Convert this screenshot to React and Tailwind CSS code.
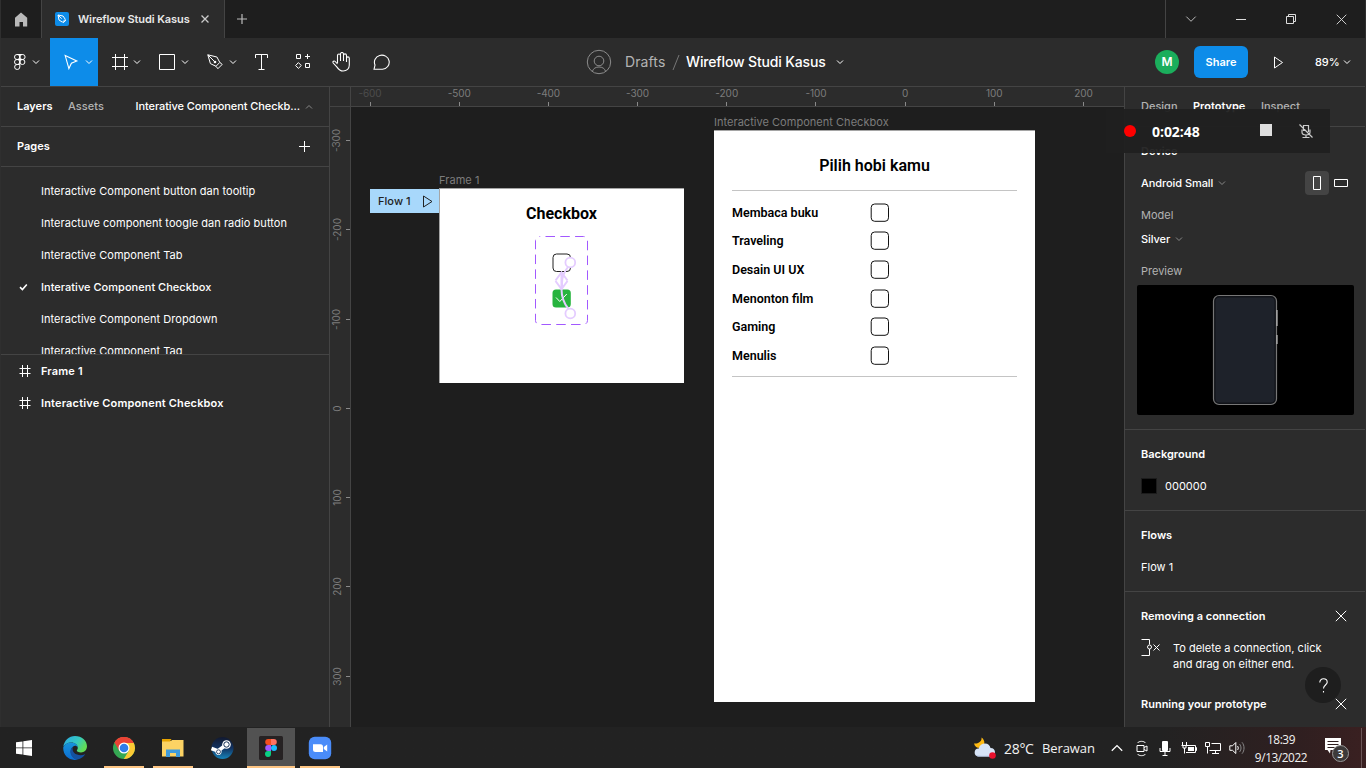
import React from "react";

/* Icon drawn on a local grid given by its view box. */
function Glyph({ box, className = "", children, stroke = "#fff", width = 1 }) {
  const [, , w, h] = box;
  return (
    <svg width={w} height={h} viewBox={box.join(" ")} className={"block shrink-0 " + className} fill="none" stroke={stroke} strokeWidth={width}>
      {children}
    </svg>
  );
}

function Chevron({ className = "", color = "#fff", up = false }) {
  return (
    <Glyph box={[0, 0, 8, 6]} stroke={color} className={className}>
      <path d={up ? "M1 4.500 4 1.500 7 4.500" : "M1 1.500 4 4.500 7 1.500"} />
    </Glyph>
  );
}

function Cross({ className = "", color = "#fff", size = 12, width = 1 }) {
  return (
    <svg width={size} height={size} viewBox="0 0 12 12" className={"block shrink-0 " + className} fill="none" stroke={color} strokeWidth={width}>
      <path d="M.8.8 11.2 11.2M11.2.8.8 11.2" />
    </svg>
  );
}

function TitleBar() {
  return (
    <div className="flex h-[38px] shrink-0 items-center">
      <div className="flex h-full w-[41px] items-center justify-center border-r border-[#444]">
        <Glyph box={[0, 0, 14, 15]} stroke="none">
          <path d="M7 .5 13.200 5.800v8.700H9V10H5.500v4.500H1V5.800z" fill="#b9b9b9" />
        </Glyph>
      </div>
      <div className="flex h-full w-[183px] items-center border-r border-[#444] bg-[#2c2c2c] pl-[13px]">
        <Glyph box={[0, 0, 14, 14]} stroke="#fff" width={1}>
          <rect width="14" height="14" rx="2" fill="#0d8ce9" stroke="none" />
          <path d="M3 3 8 4 10.3 7.3 7.5 10.2 4 8z M3 3 6.6 6.7M8.2 10.8 11 8.1" />
        </Glyph>
        <span className="ml-[9px] w-[112px] text-[11px] font-semibold tracking-[-0.1px] whitespace-nowrap text-[#e8e8e8]">Wireflow Studi Kasus</span>
        <Cross className="ml-[11px]" size={8} color="#ccc" width={1.9} />
      </div>
      <Glyph box={[0, 0, 10, 10]} stroke="#bbb" width={1.2} className="ml-[12px]">
        <path d="M5 0v10M0 5h10" />
      </Glyph>
      <div className="ml-auto flex h-full w-[200px] items-center justify-between border-l border-[#444] pr-[18px] pl-[19px]">
        <Glyph box={[0, 0, 12, 12]} stroke="#bbb"><path d="M1.3 3.6 6 8.3l4.7-4.7" /></Glyph>
        <Glyph box={[0, 0, 12, 12]} stroke="#ddd"><path d="M1 6.5h10" /></Glyph>
        <Glyph box={[0, 0, 12, 12]} stroke="#ddd" className="mr-px -ml-px"><path d="M1.5 3.5h7v7h-7zM3.5 3.5v-2h7v7h-2" /></Glyph>
        <Cross size={11} color="#ddd" />
      </div>
    </div>
  );
}

function Toolbar() {
  return (
    <div className="flex h-[49px] shrink-0 items-center border-b border-[#444] bg-[#2c2c2c]">
      <div className="flex h-full w-[49px] items-center pl-[13px]">
        <Glyph box={[0, 0, 12, 16]}>
          <rect x=".5" y=".5" width="5.3" height="5" rx="2.5" />
          <rect x="5.8" y=".5" width="5.3" height="5" rx="2.5" />
          <rect x=".5" y="5.5" width="5.3" height="5" rx="2.5" />
          <circle cx="8.4" cy="8" r="2.5" />
          <path d="M5.8 10.5V13A2.6 2.5 0 1 1 3.1 10.5zM5.8.5v10M3 .5h5.500M3 5.500h5.500" />
        </Glyph>
        <Chevron className="ml-[6px]" />
      </div>
      <div className="flex h-full w-12 items-center bg-[#0d8ce9] pl-[14px]">
        <Glyph box={[0, 0, 15, 16]} width={1.1}>
          <path d="M1.2 1.6 12.8 7 7.4 9.2 4.9 14.6z" />
        </Glyph>
        <Chevron className="ml-[6px]" />
      </div>
      <div className="flex h-full w-12 items-center pl-[14px]">
        <Glyph box={[0, 0, 16, 16]}><path d="M3.5 0v16M12.5 0v16M0 3.5h16M0 12.5h16" /></Glyph>
        <Chevron className="ml-[5px]" />
      </div>
      <div className="flex h-full w-12 items-center pl-[13px]">
        <Glyph box={[0, 0, 16, 16]}><path d="M.5.5h15v15H.5z" /></Glyph>
        <Chevron className="ml-[6px]" />
      </div>
      <div className="flex h-full w-12 items-center pl-[13px]">
        <Glyph box={[0, 0, 16, 16]}>
          <path d="M.8.8 9.9 3 12.8 8.4 9 12.3 3.4 9.6zM.8.8 7.2 7.2M9 12.3l1.9 2.4 4.3-4.3-2.4-2" />
          <circle cx="8" cy="8" r="1.3" fill="#fff" stroke="none" />
        </Glyph>
        <Chevron className="ml-[6px]" />
      </div>
      <div className="flex h-full w-10 items-center pl-[13px]">
        <Glyph box={[0, 0, 13, 16]}><path d="M.5 4V.5h12V4M6.5.5v15M3.5 15.5h6" /></Glyph>
      </div>
      <div className="flex h-full w-10 items-center pl-[13px]">
        <Glyph box={[0, 0, 16, 16]} className="-mt-[2px]">
          <path d="M1.500 1.500h4v4h-4zM10.500 10.500h4v4h-4zM12.500 1v5M10 3.500h5M3.400 9.600l2.900 2.900-2.900 2.900L.6 12.500z" />
        </Glyph>
      </div>
      <div className="flex h-full w-10 items-center pl-[10px]">
        <Glyph box={[0, 0, 18, 20]} width={1.1}>
          <path d="M5.5 11V3.5a1.5 1.5 0 0 1 3 0V9M8.5 9V2a1.5 1.5 0 0 1 3 0v7M11.5 9V3.4a1.5 1.5 0 0 1 3 0V10M14.500 6.3a1.4 1.4 0 0 1 2.8 0V13c0 3.7-2.6 6-6.2 6-3.3 0-4.600-1.5-6.100-3.900L1.200 11c-.9-1.5.9-2.7 2-1.5L5.5 12" />
        </Glyph>
      </div>
      <div className="flex h-full w-[40px] items-center pl-[11px]">
        <Glyph box={[0, 0, 18, 16]} width={1.1}>
          <path d="M1 15.3 2 11A7.4 7.1 0 1 1 9.5 15.3z" />
        </Glyph>
      </div>
      <div className="ml-[184px] flex items-center">
        <Glyph box={[0, 0, 26, 26]} stroke="#8c8c8c">
          <circle cx="13" cy="13" r="11.7" />
          <circle cx="13" cy="12" r="4.8" />
          <path d="M6.4 22.3c1-3 3.400-4.300 6.600-4.300s5.600 1.300 6.600 4.300" />
        </Glyph>
        <span className="ml-[13px] w-[41px] pb-px text-[14px] tracking-[0.1px] text-[#b3b3b3]">Drafts</span>
        <Glyph box={[0, 0, 8, 17]} stroke="#777" className="ml-[6px]"><path d="M1 16 7 1" /></Glyph>
        <span className="ml-[6px] w-[141px] pb-px text-[14px] font-medium tracking-[-0.15px] whitespace-nowrap text-white">Wireflow Studi Kasus</span>
        <Chevron className="ml-[9px]" />
      </div>
      <div className="ml-auto flex items-center pr-[14px]">
        <div className="flex size-6 items-center justify-center rounded-full bg-[#1bae5c] text-[12px] font-semibold text-white">M</div>
        <button className="ml-[15px] flex h-8 w-[54px] items-center justify-center rounded-md bg-[#0d8ce9] text-[11px] font-semibold tracking-[0.05px] text-white">Share</button>
        <Glyph box={[0, 0, 11, 13]} className="ml-[25px]"><path d="M1.500 1v11l8-5.500z" /></Glyph>
        <span className="ml-[31px] w-[24px] text-[11px] font-medium tracking-[-0.1px] text-white">89%</span>
        <Chevron className="ml-[4px]" />
      </div>
    </div>
  );
}

const pages = [
  "Interactive Component button dan tooltip",
  "Interactuve component toogle dan radio button",
  "Interactive Component Tab",
  "Interative Component Checkbox",
  "Interactive Component Dropdown",
  "Interactive Component Tag",
];

function LeftPanel() {
  return (
    <aside className="flex w-[329px] shrink-0 flex-col border-r border-[#444] bg-[#2c2c2c] text-[11px] text-white">
      <div className="flex h-10 shrink-0 items-center border-b border-[#444] pl-4">
        <span className="w-[51px] font-semibold">Layers</span>
        <span className="w-[67.500px] font-medium tracking-[0.06px] text-[#b3b3b3]">Assets</span>
        <span className="w-[169px] font-medium tracking-[-0.08px] whitespace-nowrap">Interative Component Checkb...</span>
        <Chevron up color="#888" />
      </div>
      <div className="flex h-10 shrink-0 items-center justify-between border-b border-[#444] pr-[19px] pl-4">
        <span className="font-semibold">Pages</span>
        <Glyph box={[0, 0, 11, 11]}><path d="M5.500 0v11M0 5.500h11" /></Glyph>
      </div>
      <div className="h-[188px] shrink-0 overflow-hidden border-b border-[#444] pt-2">
        {pages.map((p, i) => (
          <div key={p} className="flex h-8 items-center whitespace-nowrap">
            <span className="flex w-10 pl-[17.500px]">
              {i === 3 && (
                <Glyph box={[0, 0, 9, 8]} width={1.6}><path d="M1 4.200 3.400 6.500 7.800 1.500" /></Glyph>
              )}
            </span>
            <span className={i === 3 ? "font-medium tracking-[0.03px]" : "tracking-[0.04px]"}>{p}</span>
          </div>
        ))}
      </div>
      {["Frame 1", "Interactive Component Checkbox"].map((f) => (
        <div key={f} className="flex h-8 items-center pl-[18px] font-semibold">
          <Glyph box={[0, 0, 12, 12]} className="mr-[10px]"><path d="M3.500 0v12M8.500 0v12M.5 3.500h11M.5 8.500h11" /></Glyph>
          <span className="tracking-[0.16px]">{f}</span>
        </div>
      ))}
    </aside>
  );
}

function HorizontalRuler() {
  return (
    <div className="flex h-5 w-full shrink-0 overflow-hidden border-b border-[#444] bg-[#2c2c2c]">
      <div className="-ml-[25.6px] flex text-[10px] tracking-[-0.05px] text-[#7c7c7c]">
        {[-600, -500, -400, -300, -200, -100, 0, 100, 200].map((n) => (
          <div key={n} className={"flex w-[89.2px] shrink-0 flex-col items-center justify-between " + (n === -600 ? "text-[#4c4c4c]" : "")}>
            <span className="h-[13px] leading-[13px]">{n}</span>
            <span className="h-1 w-px bg-[#8a8a8a]" />
          </div>
        ))}
      </div>
    </div>
  );
}

function VerticalRuler() {
  return (
    <div className="w-[21px] shrink-0 overflow-hidden border-r border-[#444] bg-[#2c2c2c]">
      <div className="h-5 border-b border-[#444]" />
      <div className="-mt-[10.900px] text-[10px] tracking-[-0.05px] text-[#7c7c7c]">
        {[-300, -200, -100, 0, 100, 200, 300].map((n) => (
          <div key={n} className="flex h-[89.250px] items-center justify-between">
            <span className="flex w-[14px] items-center justify-center">
              <span className="-rotate-90 whitespace-nowrap">{n}</span>
            </span>
            <span className="h-px w-1 bg-[#8a8a8a]" />
          </div>
        ))}
      </div>
    </div>
  );
}

function CheckboxFrame() {
  return (
    <div className="absolute top-[65px] left-[19px] flex flex-col font-[Inter,sans-serif]">
      <span className="ml-[69px] h-[17px] text-[11px] leading-4 tracking-[0.06px] text-[#7c7c7c]">Frame 1</span>
      <div className="flex items-start">
        <div className="flex h-6 w-[69px] items-center justify-between bg-[#a8d8fb] pr-[6px] pl-2 text-[11px] font-medium tracking-[0.06px] text-[#222]">
          Flow 1
          <Glyph box={[0, 0, 11, 13]} stroke="#222"><path d="M1.500 1v11l8.500-5.500z" /></Glyph>
        </div>
        <div className="-mt-px flex h-[195px] w-[245px] flex-col items-center border-t border-l border-[#a5a5a5] bg-white pr-px">
          <span className="mt-[13px] font-[Roboto,sans-serif] text-[16px] leading-6 font-bold text-black">Checkbox</span>
          <Glyph box={[534, 235, 55, 91]} className="mt-[9px]">
            <rect x="535.5" y="236.500" width="52" height="88" rx="4" stroke="#a259ff" strokeDasharray="9.500 5.300" strokeDashoffset="-6" />
            <rect x="553" y="254" width="17.500" height="17.500" rx="3.500" stroke="#222" />
            <rect x="552.500" y="289.500" width="18.300" height="18" rx="3.500" fill="#27b43e" stroke="none" />
            <path d="M556 297.500l3.800 4 7-7.500" stroke="#fff" />
            <g stroke="#e4ccff" strokeWidth="2">
              <path d="M568 267c-4 5-6 9-6 16v5M568.500 309c-5-6-7-13-7-20v-17" />
              <path d="M555.500 280.500l6-8 6 8M555.500 281l6 8 6-8" />
              <circle cx="570.300" cy="262.500" r="4.900" fill="#fff" strokeWidth="1.800" />
              <circle cx="570.300" cy="313.500" r="4.900" fill="#fff" strokeWidth="1.800" />
            </g>
          </Glyph>
        </div>
      </div>
    </div>
  );
}

const hobbies = ["Membaca buku", "Traveling", "Desain UI UX", "Menonton film", "Gaming", "Menulis"];

function HobbyFrame() {
  return (
    <div className="absolute top-[7px] left-[363px] flex flex-col">
      <span className="h-4 text-[11px] leading-4 tracking-[0.03px] text-[#7c7c7c]">Interactive Component Checkbox</span>
      <div className="h-[571.500px] w-[321px] border-t border-[#a5a5a5] bg-white px-[18px] font-[Roboto,sans-serif] text-black">
        <div className="flex h-[60px] items-center justify-center border-b border-[#c4c4c4] pt-[11px] text-[16px] font-semibold">Pilih hobi kamu</div>
        <div className="h-[186px] border-b border-[#c4c4c4] pt-[7px]">
          {hobbies.map((h) => (
            <div key={h} className="flex h-[28.600px] items-center text-[12.500px] font-semibold">
              <span className="w-[138px] pt-[1.800px]">{h}</span>
              <Glyph box={[0, 0, 19, 19]} stroke="#111"><rect x="1.200" y="1" width="17.300" height="17.300" rx="3.500" /></Glyph>
            </div>
          ))}
        </div>
      </div>
    </div>
  );
}

function Canvas() {
  return (
    <main className="flex min-w-0 flex-1">
      <VerticalRuler />
      <div className="flex min-w-0 flex-1 flex-col">
        <HorizontalRuler />
        <div className="relative flex-1 overflow-hidden bg-[#1e1e1e]">
          <CheckboxFrame />
          <HobbyFrame />
        </div>
      </div>
    </main>
  );
}

function RightPanel() {
  return (
    <aside className="relative flex w-[241px] shrink-0 flex-col overflow-hidden border-l border-[#444] bg-[#2c2c2c] text-[11px] text-white">
      <div className="flex h-10 shrink-0 items-center border-b border-[#444] pl-4 text-[#b3b3b3]">
        <span className="w-[52px] font-medium">Design</span>
        <span className="w-[68px] font-semibold text-white">Prototype</span>
        <span className="font-medium">Inspect</span>
      </div>
      <section className="flex h-[303px] shrink-0 flex-col border-b border-[#444] px-3 pt-2">
        <div className="flex h-8 items-center pl-1 font-semibold">Device</div>
        <div className="flex h-8 items-center pl-1 font-medium">
          <span className="w-[72px] tracking-[-0.06px] whitespace-nowrap">Android Small</span>
          <Chevron color="#888" className="ml-[5px]" />
          <span className="ml-auto flex size-6 items-center justify-center rounded-sm bg-[#444]">
            <Glyph box={[0, 0, 8, 14]}><path d="M.5.5h7v13h-7z" /></Glyph>
          </span>
          <Glyph box={[0, 0, 14, 8]} className="mr-[5px] ml-[5px]"><path d="M.5.5h13v7H.5z" /></Glyph>
        </div>
        <div className="flex h-8 items-center pl-1 text-[#b3b3b3]">Model</div>
        <div className="flex h-4 items-center pl-1 font-medium">
          <span className="w-[28px] tracking-[-0.06px]">Silver</span>
          <Chevron color="#888" className="ml-[6px]" />
        </div>
        <div className="mt-2 flex h-8 items-center pl-1 text-[#b3b3b3]">Preview</div>
        <div className="-mt-[2px] flex h-[130px] w-[217px] items-center justify-center rounded-xs bg-black pr-px">
          <Glyph box={[0, 0, 66, 112]} stroke="#777" width={1.2}>
            <rect x="1.500" y="1.500" width="63" height="109" rx="5.500" fill="#111318" />
            <rect x="3.500" y="3.500" width="59" height="105" rx="4" fill="#1e222a" stroke="none" />
            <path d="M65 16v16M65 41v9" stroke="#bbb" />
          </Glyph>
        </div>
      </section>
      <section className="h-[81px] shrink-0 border-b border-[#444] px-4 pt-2">
        <div className="flex h-8 items-center font-semibold">Background</div>
        <div className="flex h-8 items-center gap-2">
          <span className="size-4 border border-[#1c1c1c] bg-black" />
          <span>000000</span>
        </div>
      </section>
      <section className="h-[81px] shrink-0 border-b border-[#444] px-4 pt-2">
        <div className="flex h-8 items-center font-semibold">Flows</div>
        <div className="flex h-8 items-center">Flow 1</div>
      </section>
      <section className="flex shrink-0 flex-col pt-2 pr-[18px] pl-4">
        <div className="flex h-8 items-center justify-between font-semibold">Removing a connection<Cross /></div>
        <div className="flex">
          <Glyph box={[0, 0, 20, 20]} className="mt-[6px]">
            <path d="M.5 1.500h8v5M8.500 11v6.500h-8M12.500 6.500l6 6M18.500 6.500l-6 6" />
            <circle cx="8.500" cy="9" r="2" />
          </Glyph>
          <p className="ml-3 pt-2 leading-4 whitespace-nowrap">To delete a connection, click<br />and drag on either end.</p>
        </div>
        <div className="mt-4 flex h-8 items-center justify-between font-semibold">Running your prototype<Cross /></div>
      </section>
      <div className="absolute top-[580px] right-[24px] flex size-9 items-center justify-center rounded-full bg-[#1e1e1e]">
        <Glyph box={[0, 0, 9, 15]} width={1.1}>
          <path d="M.8 4.500C.8 2.200 2.200.8 4.500.8S8.200 2.200 8.200 4.200c0 2.700-3.700 3-3.700 6.300M4.500 13v1.500" />
        </Glyph>
      </div>
    </aside>
  );
}

function Recorder() {
  return (
    <div className="absolute top-[109px] left-[1106px] flex h-11 w-[224px] items-center bg-[#202020]/95 pl-[18px]">
      <span className="size-3 rounded-full bg-[#fe0000]" />
      <span className="ml-4 w-[49px] font-['Open_Sans',sans-serif] text-[14px] font-bold tracking-[-0.05px] text-white">0:02:48</span>
      <span className="mb-[2px] ml-[59px] size-[12px] bg-[#dedede]" />
      <Glyph box={[0, 0, 16, 16]} stroke="#ccc" width={1.200} className="ml-[26px]">
        <path d="M5.500 8V2.500h5V9M4 6.500v2.800c0 1.700 1 2.700 4 2.700s4-1 4-2.700V6.500M8 12v2.500M4.500 14.500h7M1.500 1.500l13 13" />
      </Glyph>
    </div>
  );
}

function TaskCell({ children, state = "" }) {
  return (
    <div className={"flex h-full w-12 flex-col items-center " + (state === "active" ? "bg-[#525252]" : "")}>
      <div className="flex min-h-0 flex-1 items-center justify-center pt-px">{children}</div>
      <div className={"h-[2px] " + (state === "active" ? "w-12 bg-[#fdc583]" : state === "open" ? "w-10 bg-[#fdc583]" : "w-10")} />
    </div>
  );
}

function Taskbar() {
  return (
    <footer className="flex h-[41px] shrink-0 items-center bg-linear-to-r from-[#222] from-85% via-[#2f1f20] via-95% to-[#3a2021] pt-px font-['Open_Sans',sans-serif] text-[#f2f2f2]">
      <TaskCell>
        <Glyph box={[0, 0, 16, 16]} stroke="none">
          <path fill="#fff" d="M0 2.300 6.500 1.400V7.500H0zM7.300 1.300 16 0v7.500H7.300zM0 8.300h6.500v6.300L0 13.700zM7.300 8.300H16V16l-8.700-1.300z" />
        </Glyph>
      </TaskCell>
      <div className="ml-[3px] flex h-full gap-px">
        <TaskCell>
          <svg width="24" height="24" viewBox="0 0 24 24">
            <defs>
              <linearGradient id="edgeTop" x1="0" y1="0" x2="1" y2=".5"><stop stopColor="#2aa7e8" /><stop offset=".6" stopColor="#35c9c0" /><stop offset="1" stopColor="#62dc55" /></linearGradient>
              <linearGradient id="edgeLow" x1="0" y1="0" x2="0" y2="1"><stop stopColor="#1795dc" /><stop offset="1" stopColor="#0c6bd0" /></linearGradient>
            </defs>
            <path fill="url(#edgeTop)" d="M.3 10.800C1.200 4.500 6 0 12 0c6.800 0 12 4.800 12 10.300 0 3.800-2.800 6.200-6 6.200-2.600 0-4.200-.8-4.200-1.900 0-.7 1-1.200 1-2.900 0-2.900-3-5.200-6.600-5.200C4.800 6.500 2 8.200.3 10.800z" />
            <path fill="url(#edgeLow)" d="M.2 11.500C1.500 8 5 6.300 8.500 6.400c3.700.1 6.400 2.500 6.300 5.300-1-2-3-2.500-4.600-1.200C5.500 14 8 22 14.700 23.500 6.800 25.500 0 20 .2 11.500z" />
            <path fill="#1451a0" d="M10 10.700C5 14 7.500 22.500 14.500 23.600c3.500-.7 6.200-2.800 7.800-5.600-5.800 3.200-14.800-.5-12.300-7.300z" />
          </svg>
        </TaskCell>
        <TaskCell state="open">
          <svg width="22" height="22" viewBox="0 0 22 22">
            <circle cx="11" cy="11" r="11" fill="#35a853" />
            <path fill="#ea4335" d="M1.500 5.500A11 11 0 0 1 20.500 5.500L11 11z" />
            <path fill="#ea4335" d="M1.500 5.500 6.200 13.700 11 6h9.800A11 11 0 0 0 1.500 5.500z" />
            <path fill="#fcc934" d="M20.800 6A11 11 0 0 1 10.800 22l5-8.300L11 6z" />
            <circle cx="11" cy="11" r="5.500" fill="#fff" />
            <circle cx="11" cy="11" r="4.300" fill="#2f7de9" />
          </svg>
        </TaskCell>
        <TaskCell state="open">
          <svg width="22" height="18" viewBox="0 0 22 18">
            <path fill="#fcd364" d="M0 2h9l1-1h11.500v16.500H0z" />
            <path fill="#e8a400" d="M0 0h9.500L8 2.500H0z" />
            <path fill="#3f9bdb" d="M4 10.500h14V18h-4v-4H8v4H4z" />
          </svg>
        </TaskCell>
        <TaskCell>
          <svg width="24" height="24" viewBox="0 0 24 24">
            <defs><linearGradient id="steamBg" x1="0" y1="0" x2="0" y2="1"><stop stopColor="#12192f" /><stop offset=".5" stopColor="#123260" /><stop offset="1" stopColor="#1684bb" /></linearGradient></defs>
            <circle cx="12.500" cy="12" r="11" fill="url(#steamBg)" />
            <path d="M1.500 12.500 8 15 14.500 10" stroke="#fff" strokeWidth="3.500" fill="none" />
            <circle cx="16.500" cy="8.500" r="4.300" fill="#fff" />
            <circle cx="16.500" cy="8.500" r="2.700" fill="#fff" stroke="#163055" />
            <circle cx="8.500" cy="15.800" r="3.100" fill="#fff" />
            <circle cx="8.500" cy="15.800" r="2" fill="none" stroke="#163055" strokeWidth=".8" />
          </svg>
        </TaskCell>
        <TaskCell state="active">
          <svg width="24" height="24" viewBox="0 0 24 24">
            <rect width="24" height="24" rx="1.500" fill="#262223" />
            <path fill="#f24e1e" d="M12 3H9.200a3 3 0 0 0 0 6H12z" />
            <path fill="#ff7262" d="M12 3h2.800a3 3 0 0 1 0 6H12z" />
            <path fill="#a259ff" d="M12 9H9.200a3 3 0 0 0 0 6H12z" />
            <circle cx="15" cy="12" r="3" fill="#1abcfe" />
            <path fill="#0acf83" d="M12 15H9.200a3 3 0 1 0 2.800 3z" />
          </svg>
        </TaskCell>
        <TaskCell state="open">
          <svg width="24" height="24" viewBox="0 0 24 24">
            <rect x=".8" y=".8" width="22.400" height="22.400" rx="6" fill="#4a8cf9" />
            <path fill="#fff" d="M5 8.200h7.500A2.500 2.500 0 0 1 15 10.700V16H7.500A2.500 2.500 0 0 1 5 13.500zM15.800 11l3.400-2.500v7l-3.400-2.500z" />
          </svg>
        </TaskCell>
      </div>
      <div className="ml-auto flex items-center">
        <svg width="24" height="22" viewBox="0 0 24 22">
          <path fill="#fdb913" d="M8.500.5c.5 3-2 6.500-7.500 6C2 10.500 6 12 9 10.500S12.500 3 8.500.5z" />
          <path fill="#d6e3f6" d="M5.500 19.500a4 4 0 0 1 .3-8C6.500 8 9 6.500 12 6.500s5 2 5.500 4.500c3 0 4.500 2 4.500 4.300 0 2.500-2 4.200-4.500 4.200z" />
          <path fill="#b9cbea" d="M3 18c4 1 11 1 18 0-1 1-2 1.500-3.500 1.500h-12C4.500 19.500 3.500 19 3 18z" />
          <circle cx="19.500" cy="18.500" r="3.300" fill="#e8112d" />
        </svg>
        <span className="ml-[7px] w-[38px] pt-px text-[14px] tracking-[-0.3px]">28°C</span>
        <span className="w-[69px] pt-px text-[13px] tracking-[-0.1px]">Berawan</span>
        <Glyph box={[0, 0, 12, 8]} width={1.300}><path d="M.8 6.800 6 1.600 11.200 6.800" /></Glyph>
        <Glyph box={[0, 0, 12, 17]} className="ml-[13px]">
          <path d="M1.500 3C3 .8 8 .8 9.500 3M1.500 14c1.500 2.200 6.500 2.200 8 0M1 5.500h7v6H1zM8 7.500l3-1.500v5l-3-1.500" />
        </Glyph>
        <Glyph box={[0, 0, 12, 17]} className="ml-[11px]">
          <rect x="3" y="1" width="6" height="10" rx="1" fill="#fff" stroke="none" />
          <path d="M1 8v3.500h10V8M6 12v3.500M3.500 15.500h5" />
        </Glyph>
        <Glyph box={[0, 0, 16, 14]} className="ml-[10px]">
          <path d="M5 4.500h9.500v7H5M14.500 6.500h1v3h-1M3.500 7v5.500M1.500 1v3.500h4V1M.5 4.500h6M2 5v2h3V5" />
          <rect x="7" y="6" width="6" height="4" fill="#fff" stroke="none" />
        </Glyph>
        <Glyph box={[0, 0, 17, 14]} className="ml-[8px]">
          <path d="M6.500 2.500h9v7h-11M10.500 9.500v3M7 12.500h7M.5 1.500h4v4h-4zM2.500 5.500v7" />
        </Glyph>
        <Glyph box={[0, 0, 17, 14]} className="ml-[7px]">
          <path d="M.8 4.800h2.700l3.300-3.300v11L3.500 9.300H.8zM8.500 5c1 1.200 1 3 0 4" />
          <path stroke="#888" d="M10.500 3c2 2.300 2 5.700 0 8M13 1.300c2.700 3 2.700 8.400 0 11.400" />
        </Glyph>
        <div className="ml-[5px] flex w-[60px] flex-col items-center text-[11.800px] leading-[18px] tracking-[-0.4px] whitespace-nowrap">
          <span>18:39</span>
          <span>9/13/2022</span>
        </div>
        <Glyph box={[0, 0, 26, 26]} className="mt-[2px] ml-[12px]">
          <path fill="#fff" stroke="none" d="M2 2h16v12H7.500L7 17.500 4.500 14H2z" />
          <path stroke="#302020" d="M4.500 5.500h11M4.500 8.500h11M4.500 11.500h7" />
          <circle cx="17.500" cy="17.500" r="8" fill="#3d3a3a" stroke="#999" />
          <text x="17.500" y="21.500" textAnchor="middle" fill="#fff" stroke="none" className="text-[11px] font-semibold">3</text>
        </Glyph>
        <span className="ml-[12px] h-[40px] w-px bg-[#6b5556]" />
        <span className="w-1" />
      </div>
    </footer>
  );
}

export default function App() {
  return (
    <div className="relative flex h-[768px] w-[1366px] flex-col overflow-hidden bg-[#1e1e1e] font-[Inter,sans-serif]">
      <div className="flex h-[727px] flex-col border-x border-[#2f2f2f]">
        <TitleBar />
        <Toolbar />
        <div className="flex min-h-0 flex-1">
          <LeftPanel />
          <Canvas />
          <RightPanel />
        </div>
      </div>
      <Taskbar />
      <Recorder />
    </div>
  );
}
